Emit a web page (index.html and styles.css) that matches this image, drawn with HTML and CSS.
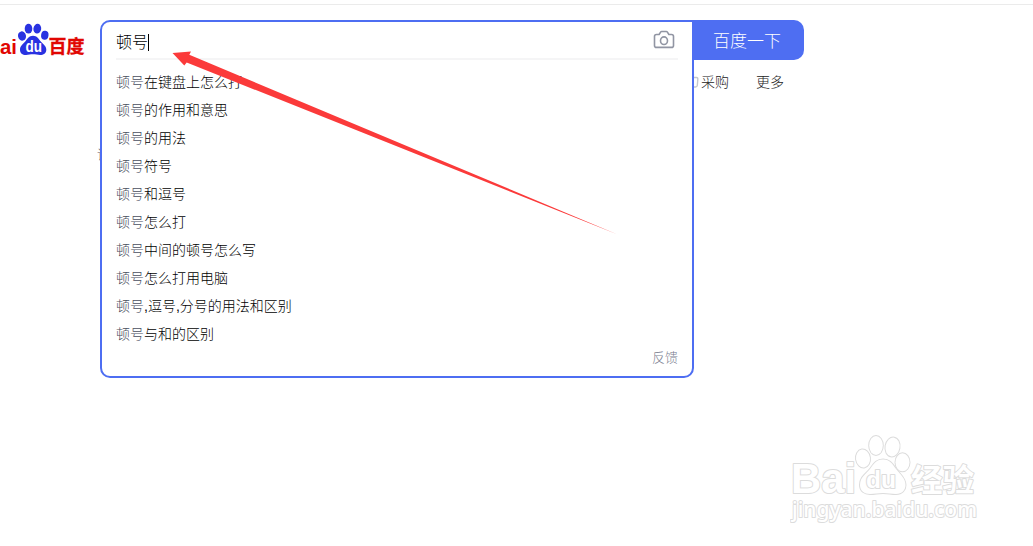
FILE: index.html
```
<!DOCTYPE html>
<html lang="zh-CN">
<head>
    <meta charset="UTF-8">
    <meta name="viewport" content="width=device-width, initial-scale=1.0">
    <title>百度一下</title>
    <link rel="stylesheet" href="styles.css">
</head>
<body>
    <div class="top-line"></div>

    <header class="header">
        <a class="logo" href="#">
            <svg width="100" height="40" viewBox="0 0 100 40">
                <text class="logo-latin" x="0" y="33.500" textLength="17" lengthAdjust="spacingAndGlyphs">ai</text>
                <g fill="#2932e1">
                    <ellipse cx="22" cy="16" rx="4" ry="4.700" transform="rotate(-12 22 16)"/>
                    <ellipse cx="28.500" cy="8.700" rx="3.800" ry="4.900"/>
                    <ellipse cx="37.300" cy="8.700" rx="3.900" ry="4.900" transform="rotate(8 37.300 8.700)"/>
                    <ellipse cx="44.800" cy="15.300" rx="3.700" ry="4.500" transform="rotate(8 44.800 15.300)"/>
                    <path d="M33 15.700c-4 0-5.500 3-7.300 5.200-2.400 3-5.700 4.600-5.700 8.800 0 3.400 2.400 5.300 6 5.300 2.500 0 4.500-.7 7-.7s4.500.7 7 .7c3.600 0 6.300-1.900 6.300-5.300 0-4.200-3.600-5.800-6-8.800-1.800-2.200-3.300-5.200-7.300-5.200z"/>
                </g>
                <text class="logo-du" x="25.500" y="32" textLength="16.500" lengthAdjust="spacingAndGlyphs">du</text>
                <text class="logo-cn" x="48.500" y="32.500" textLength="36" lengthAdjust="spacingAndGlyphs">百度</text>
            </svg>
        </a>

        <form class="search-form">
            <div class="search-box">
                <div class="search-panel">
                    <div class="search-input">
                        <span class="query">顿号</span><span class="caret"></span>
                        <svg class="camera" width="22" height="20" viewBox="0 0 22 20" fill="none" stroke="#9195a3" stroke-width="1.600" stroke-linejoin="round">
                            <path d="M3.500 4.500h2.600l1.500-2.400q.4-.6 1.100-.6h4.600q.7 0 1.100.6l1.500 2.400h2.600q2 0 2 2v8.900q0 2-2 2h-15q-2 0-2-2V6.500q0-2 2-2z"/>
                            <ellipse cx="11" cy="10.700" rx="3.500" ry="3.800"/>
                        </svg>
                    </div>
                    <ul class="suggestions">
                        <li><span>顿号</span>在键盘上怎么打</li>
                        <li><span>顿号</span>的作用和意思</li>
                        <li><span>顿号</span>的用法</li>
                        <li><span>顿号</span>符号</li>
                        <li><span>顿号</span>和逗号</li>
                        <li><span>顿号</span>怎么打</li>
                        <li><span>顿号</span>中间的顿号怎么写</li>
                        <li><span>顿号</span>怎么打用电脑</li>
                        <li><span>顿号</span>,逗号,分号的用法和区别</li>
                        <li><span>顿号</span>与和的区别</li>
                    </ul>
                    <div class="feedback">反馈</div>
                </div>
            </div>
            <button class="search-btn" type="button">百度一下</button>
        </form>
    </header>

    <nav class="tabs">
        <svg class="tab-icon" width="14" height="14" viewBox="0 0 14 14" fill="none" stroke="#c4c7ce" stroke-width="1.400">
            <path d="M8 3.500h3.500q1.500 0 1.300 2l-.5 6q-.2 1.500-1.800 1.500H9M8.500.5L7 9"/>
        </svg>
        <a href="#">采购</a>
        <a href="#">更多</a>
    </nav>

    <p class="hint">请</p>

    <svg class="arrow" width="1033" height="546" viewBox="0 0 1033 546">
        <polygon points="172.500,53 191,51.500 189.300,54.800 617,234.200 186.700,62.500 184.300,65.500" fill="#fb3a3a"/>
    </svg>

    <svg class="watermark" width="200" height="100" viewBox="0 0 200 100">
        <text class="mark-latin" x="1" y="62.500" textLength="65" lengthAdjust="spacingAndGlyphs">Bai</text>
        <g class="mark-paw">
            <ellipse cx="73" cy="28.500" rx="7" ry="9" transform="rotate(-8 73 28.500)"/>
            <ellipse cx="86" cy="15.500" rx="6.800" ry="9.500"/>
            <ellipse cx="102.500" cy="17" rx="7" ry="9.500" transform="rotate(10 102.500 17)"/>
            <ellipse cx="112.500" cy="32.300" rx="7" ry="9"/>
            <path d="M93 29.500c-7 0-9.500 5-13 9.500-4 5-10 8-10 16 0 6 4.500 9 10 9 5 0 8-1 13-1s8 1 13 1c6 0 9.500-4 9.500-9 0-7-5-10-9.500-16-3.500-5-6-9.500-13-9.500z"/>
        </g>
        <text class="mark-du" x="76" y="57.500" textLength="30" lengthAdjust="spacingAndGlyphs">du</text>
        <text class="mark-cn" x="121" y="60.500" textLength="63" lengthAdjust="spacingAndGlyphs">经验</text>
        <text class="mark-url" x="2" y="87" textLength="185" lengthAdjust="spacingAndGlyphs">jingyan.baidu.com</text>
    </svg>
</body>
</html>
```
FILE: styles.css
```
* {
    margin: 0;
    padding: 0;
    box-sizing: border-box;
}

body {
    position: relative;
    height: 546px;
    overflow: hidden;
    background: #fff;
    font-family: "Liberation Sans", "Noto Sans CJK SC", sans-serif;
    font-weight: 300;
    color: #000;
}

a {
    color: inherit;
    text-decoration: none;
}

.top-line {
    height: 5px;
    border-bottom: 1px solid #ebebeb;
}

.header {
    display: flex;
    padding-top: 15px;
}

.logo {
    width: 100px;
    height: 40px;
}

.logo svg {
    display: block;
}

.logo-latin {
    font: bold 21px "Liberation Sans", sans-serif;
    fill: #e10602;
}

.logo-du {
    font: bold 16px "Liberation Sans", sans-serif;
    fill: #fff;
}

.logo-cn {
    font: bold 18px "Noto Sans CJK SC", sans-serif;
    fill: #e10602;
    stroke: #e10602;
    stroke-width: 0.3;
}

.search-form {
    display: flex;
}

.search-box {
    position: relative;
    width: 592px;
    height: 40px;
}

/* drops over the tabs and the results below */
.search-panel {
    position: absolute;
    top: 0;
    left: 0;
    z-index: 1;
    width: 594px;
    height: 358px;
    padding: 0 14px;
    background: #fff;
    border: 2px solid #4e6ef2;
    border-radius: 10px 0 10px 10px;
}

.search-input {
    display: flex;
    align-items: center;
    height: 38px;
    padding-right: 3px;
    border-bottom: 2px solid #f5f5f6;
}

.query {
    font-size: 16px;
    line-height: 36px;
    padding-top: 5px;
}

.caret {
    width: 1px;
    height: 17px;
    margin-top: 4px;
    background: #000;
}

.camera {
    margin-left: auto;
}

.suggestions {
    padding-top: 8px;
    list-style: none;
}

.suggestions li {
    height: 28px;
    font-size: 14px;
    line-height: 28px;
}

.suggestions span {
    color: #4a4e60;
}

.feedback {
    font-size: 13px;
    line-height: 20px;
    text-align: right;
    color: #7d8191;
}

.search-btn {
    width: 112px;
    height: 40px;
    padding: 0 2px 2px 0;
    border: none;
    border-radius: 0 10px 10px 0;
    background: #4e6ef2;
    color: #fff;
    font-family: inherit;
    font-size: 17px;
    font-weight: 300;
    cursor: pointer;
}

.tabs {
    display: flex;
    align-items: center;
    height: 42px;
    padding-left: 685px;
    font-size: 14px;
    color: #222;
}

.tab-icon {
    margin-right: 2px;
}

.tabs a + a {
    margin-left: 27px;
}

.hint {
    padding: 43px 0 0 97px;
    font-size: 13px;
    line-height: 20px;
    color: #555;
}

.arrow {
    position: absolute;
    top: 0;
    left: 0;
    z-index: 2;
}

.watermark {
    position: absolute;
    top: 430px;
    left: 790px;
}

.watermark text,
.mark-paw {
    fill: #fff;
    stroke: #dcdcdc;
    stroke-width: 2;
    stroke-linejoin: round;
    paint-order: stroke;
}

.mark-latin {
    font: bold 42px "Liberation Sans", sans-serif;
}

.mark-du {
    font: bold 23px "Liberation Sans", sans-serif;
}

.mark-cn {
    font: bold 31px "Noto Sans CJK SC", sans-serif;
}

.watermark .mark-url {
    font: 500 22px "Noto Sans", sans-serif;
}
```
